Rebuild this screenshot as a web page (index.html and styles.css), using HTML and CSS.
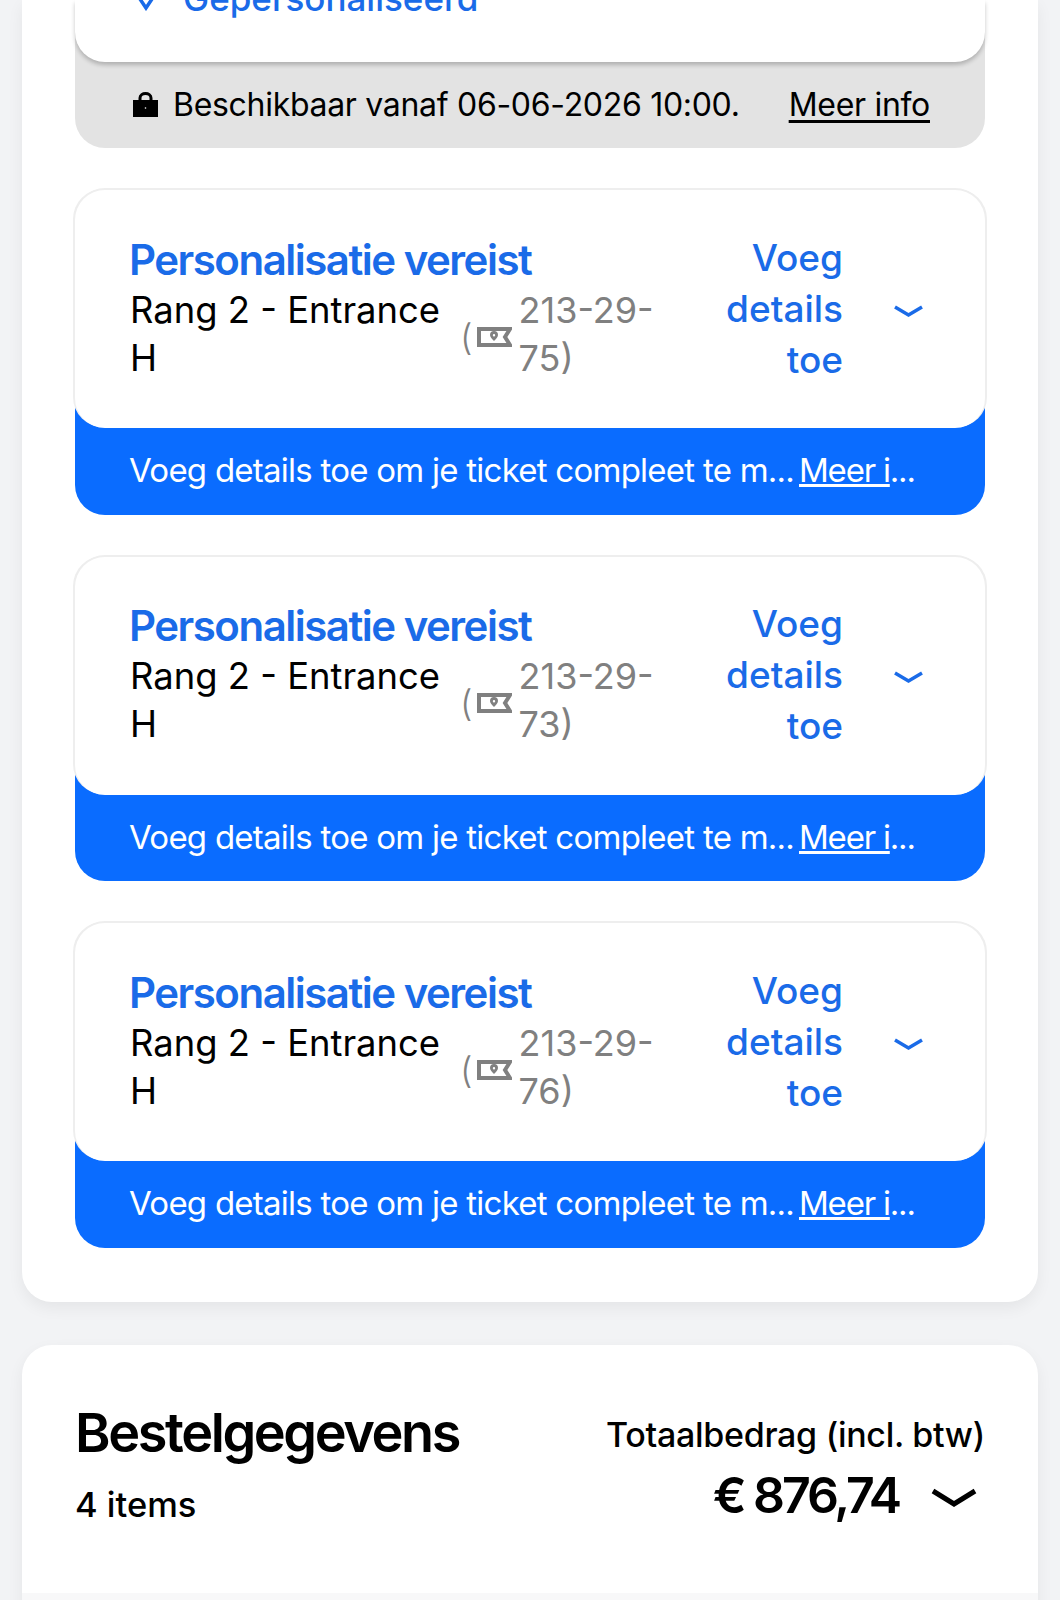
FILE: index.html
```html
<!DOCTYPE html>
<html lang="nl">
<head>
    <meta charset="UTF-8">
    <meta name="viewport" content="width=device-width, initial-scale=1.0">
    <title>Bestelling</title>
    <link rel="stylesheet" href="styles.css">
</head>
<body>
    <section class="panel panel-tickets">
        <!-- eerste ticket loopt boven het scherm uit -->
        <div class="locked">
            <div class="locked-top">
                <div class="personal">
                    <svg class="personal-icon" viewBox="0 0 26 20"><path d="M3 2l10 15L23 2"/></svg>
                    <span>Gepersonaliseerd</span>
                </div>
            </div>
            <div class="locked-note">
                <svg class="lock-icon" viewBox="0 0 25 25">
                    <path class="lock-body" d="M0 8h25v17H0z"/>
                    <path class="lock-arc" d="M7 8V6c0-6 11-6 11 0v2"/>
                    <circle class="lock-dot" cx="12.500" cy="16" r="0.800"/>
                </svg>
                <span class="locked-text">Beschikbaar vanaf 06-06-2026 10:00.</span>
                <a class="locked-link" href="#">Meer info</a>
            </div>
        </div>

        <article class="ticket">
            <div class="ticket-main">
                <div class="ticket-info">
                    <div class="ticket-title">Personalisatie vereist</div>
                    <div class="ticket-row">
                        <div class="ticket-name">Rang 2 - Entrance H</div>
                        <div class="ticket-seat">
                            <span class="paren">(</span>
                            <svg class="seat-icon" viewBox="0 0 35 20"><path class="seat-outline" d="M2 2h31l-5 8 5 8H2z"/><path class="seat-pin" fill-rule="evenodd" d="M17 4a4 4 0 0 1 4 4c0 2-2 4-4 6-2-2-4-4-4-6a4 4 0 0 1 4-4zm0 3a1.200 1.200 0 1 0 0 2.400 1.200 1.200 0 0 0 0-2.400z"/></svg>
                            <span class="seat-number">213-29-75)</span>
                        </div>
                    </div>
                </div>
                <a class="ticket-action" href="#">Voeg details toe</a>
                <svg class="chevron" viewBox="0 0 31 14"><path d="M2 3l13.500 8L29 3"/></svg>
            </div>
            <div class="ticket-note">
                <span class="note-text">Voeg details toe om je ticket compleet te m...</span>
                <span class="note-more"><a href="#">Meer i</a>...</span>
            </div>
        </article>

        <article class="ticket">
            <div class="ticket-main">
                <div class="ticket-info">
                    <div class="ticket-title">Personalisatie vereist</div>
                    <div class="ticket-row">
                        <div class="ticket-name">Rang 2 - Entrance H</div>
                        <div class="ticket-seat">
                            <span class="paren">(</span>
                            <svg class="seat-icon" viewBox="0 0 35 20"><path class="seat-outline" d="M2 2h31l-5 8 5 8H2z"/><path class="seat-pin" fill-rule="evenodd" d="M17 4a4 4 0 0 1 4 4c0 2-2 4-4 6-2-2-4-4-4-6a4 4 0 0 1 4-4zm0 3a1.200 1.200 0 1 0 0 2.400 1.200 1.200 0 0 0 0-2.400z"/></svg>
                            <span class="seat-number">213-29-73)</span>
                        </div>
                    </div>
                </div>
                <a class="ticket-action" href="#">Voeg details toe</a>
                <svg class="chevron" viewBox="0 0 31 14"><path d="M2 3l13.500 8L29 3"/></svg>
            </div>
            <div class="ticket-note">
                <span class="note-text">Voeg details toe om je ticket compleet te m...</span>
                <span class="note-more"><a href="#">Meer i</a>...</span>
            </div>
        </article>

        <article class="ticket">
            <div class="ticket-main">
                <div class="ticket-info">
                    <div class="ticket-title">Personalisatie vereist</div>
                    <div class="ticket-row">
                        <div class="ticket-name">Rang 2 - Entrance H</div>
                        <div class="ticket-seat">
                            <span class="paren">(</span>
                            <svg class="seat-icon" viewBox="0 0 35 20"><path class="seat-outline" d="M2 2h31l-5 8 5 8H2z"/><path class="seat-pin" fill-rule="evenodd" d="M17 4a4 4 0 0 1 4 4c0 2-2 4-4 6-2-2-4-4-4-6a4 4 0 0 1 4-4zm0 3a1.200 1.200 0 1 0 0 2.400 1.200 1.200 0 0 0 0-2.400z"/></svg>
                            <span class="seat-number">213-29-76)</span>
                        </div>
                    </div>
                </div>
                <a class="ticket-action" href="#">Voeg details toe</a>
                <svg class="chevron" viewBox="0 0 31 14"><path d="M2 3l13.500 8L29 3"/></svg>
            </div>
            <div class="ticket-note">
                <span class="note-text">Voeg details toe om je ticket compleet te m...</span>
                <span class="note-more"><a href="#">Meer i</a>...</span>
            </div>
        </article>
    </section>

    <section class="panel panel-order">
        <div class="order">
            <div class="order-left">
                <h2 class="order-title">Bestelgegevens</h2>
                <div class="order-count">4 items</div>
            </div>
            <div class="order-right">
                <div class="order-label">Totaalbedrag (incl. btw)</div>
                <div class="order-total">
                    <span class="order-price">€ 876,74</span>
                    <svg class="order-chevron" viewBox="0 0 46 20"><path d="M2 3l21 13L44 3"/></svg>
                </div>
            </div>
        </div>
        <div class="order-next"></div>
    </section>
</body>
</html>
```

FILE: styles.css
```css
body {
    margin: 0;
    height: 1600px;
    overflow: hidden;
    background-color: #f2f3f5;
    font-family: Inter, "Liberation Sans", sans-serif;
    color: #000;
}

a {
    color: inherit;
}

.panel {
    margin: 0 22px;
    background-color: #fff;
    box-shadow: 0 6px 16px rgba(0, 0, 0, 0.06);
}

.panel-tickets {
    padding: 0 53px 54.500px;
    border-radius: 0 0 30px 30px;
}

.panel-order {
    margin-top: 43px;
    border-radius: 30px 30px 0 0;
}

/* eerste ticket */
.locked {
    height: 148px;
    background-color: #e3e3e3;
    border-radius: 0 0 30px 30px;
}

.locked-top {
    display: flex;
    align-items: flex-start;
    height: 62px;
    overflow: hidden;
    background-color: #fff;
    border-radius: 0 0 30px 30px;
    box-shadow: 0 3px 4px rgba(0, 0, 0, 0.22);
}

.personal {
    display: flex;
    align-items: center;
    gap: 24px;
    margin: -24px 0 0 58px;
    color: #1a6be8;
    font-size: 35px;
    font-weight: 500;
    line-height: 44px;
}

.personal-icon {
    width: 26px;
    height: 20px;
    margin-top: 6px;
    fill: none;
    stroke: #1a6be8;
    stroke-width: 3.5;
}

.locked-note {
    display: flex;
    align-items: center;
    height: 84px;
    padding: 0 55px 2px 58px;
    font-size: 32px;
    letter-spacing: -0.3px;
}

.lock-icon {
    width: 25px;
    height: 25px;
    margin: 0 15px 0 0;
}

.lock-body {
    fill: #000;
}

.lock-arc {
    fill: none;
    stroke: #000;
    stroke-width: 3;
}

.lock-dot {
    fill: #fff;
}

.locked-text {
    flex: 1;
}

.locked-link {
    text-decoration-thickness: 3px;
    text-underline-offset: 4px;
}

/* tickets */
.ticket {
    margin-top: 42px;
    background-color: #0a6cff;
    border-radius: 30px;
}

.ticket-main {
    display: flex;
    align-items: center;
    box-sizing: border-box;
    height: 238px;
    padding: 0 60px 0 55px;
    background-color: #fff;
    border-radius: 30px;
    box-shadow: 0 -2px 0 #eee, -2px -1px 0 #eee, 2px -1px 0 #eee;
}

.ticket-info {
    flex: 1;
    min-width: 0;
}

.ticket-title {
    margin: -2px 0 0 -1px;
    color: #1a6be8;
    font-size: 42px;
    font-weight: 600;
    line-height: 50px;
    letter-spacing: -1.500px;
}

.ticket-row {
    display: flex;
    align-items: center;
    margin-top: 1px;
}

.ticket-name {
    width: 330px;
    font-size: 36.400px;
    line-height: 48px;
}

.ticket-seat {
    display: flex;
    align-items: center;
    color: #808080;
    font-size: 36px;
    line-height: 48px;
}

.paren {
    margin: 6px 4px 0 0;
    font-weight: 300;
}

.seat-icon {
    flex: none;
    width: 35px;
    height: 20px;
    margin: 6px 7px 0 0;
}

.seat-outline {
    fill: none;
    stroke: #808080;
    stroke-width: 4;
}

.seat-pin {
    fill: #808080;
}

.seat-number {
    width: 140px;
}

.ticket-action {
    flex: none;
    width: 140px;
    margin-top: -2px;
    color: #1a6be8;
    font-size: 37px;
    font-weight: 500;
    line-height: 51px;
    text-align: right;
    text-decoration: none;
}

.chevron {
    flex: none;
    width: 31px;
    height: 14px;
    margin: 3px 1px 0 50px;
    fill: none;
    stroke: #1a6be8;
    stroke-width: 3.5;
}

.ticket-note {
    display: flex;
    align-items: center;
    box-sizing: border-box;
    height: 86.500px;
    padding: 0 55px 2px 54px;
    color: #fff;
    font-size: 33px;
    letter-spacing: -0.750px;
    white-space: nowrap;
}

.note-text {
    width: 670px;
}

.note-more {
    letter-spacing: -1.200px;
}

/* bestelgegevens */
.order {
    display: flex;
    justify-content: space-between;
    box-sizing: border-box;
    height: 248px;
    padding: 56px 53px 0;
}

.order-title {
    margin: 0;
    font-size: 54px;
    font-weight: 600;
    line-height: 64px;
    letter-spacing: -2.400px;
}

.order-count {
    margin-top: 18px;
    font-size: 34.500px;
    font-weight: 500;
    line-height: 44px;
}

.order-right {
    text-align: right;
}

.order-label {
    margin-top: 12px;
    font-size: 34px;
    font-weight: 500;
    line-height: 44px;
    letter-spacing: -0.3px;
}

.order-total {
    display: flex;
    align-items: center;
    justify-content: flex-end;
    margin-top: 6px;
}

.order-price {
    font-size: 50px;
    font-weight: 600;
    line-height: 64px;
    letter-spacing: -3.100px;
}

.order-chevron {
    width: 46px;
    height: 20px;
    margin: 6px 8px 0 32px;
    fill: none;
    stroke: #000;
    stroke-width: 5;
}

.order-next {
    height: 20px;
    background-color: #f8f8f9;
}
```
